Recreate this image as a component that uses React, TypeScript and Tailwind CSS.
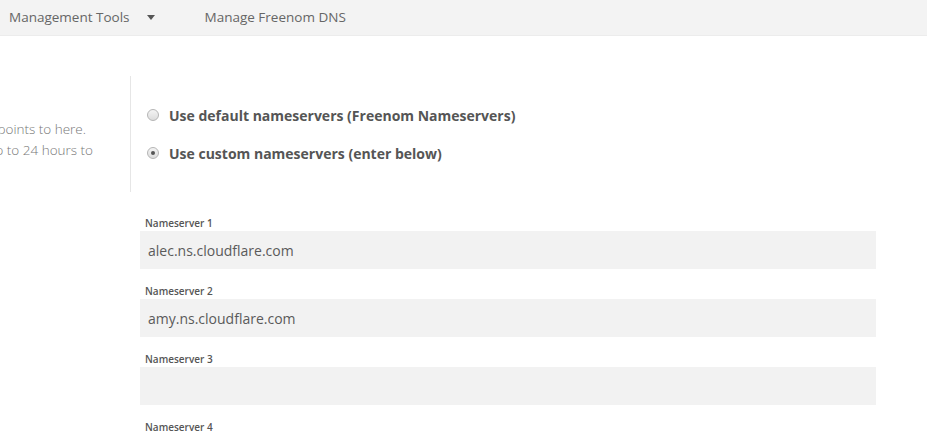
import React from 'react';

const font = { fontFamily: '"Open Sans", "Noto Sans", sans-serif' };

const servers = ['alec.ns.cloudflare.com', 'amy.ns.cloudflare.com', '', ''];

const Radio: React.FC<{ checked?: boolean; label: string }> = ({ checked, label }) => (
  <label className="flex items-center h-[20px]">
    <span className="w-[12px] h-[12px] rounded-full border border-[#b5b5b5] bg-gradient-to-b from-[#f4f4f4] to-[#dcdcdc] flex items-center justify-center mr-[10px]">
      {checked && <span className="w-[4px] h-[4px] rounded-full bg-[#555]" />}
    </span>
    <span className="text-[14px] font-bold text-[#555]">{label}</span>
  </label>
);

export default function App() {
  return (
    <div className="w-[927px] h-[431px] overflow-hidden bg-white" style={font}>
      <div className="h-[36px] bg-[#f3f3f3] border-b border-[#ececec] flex items-center text-[13.5px] text-[#666]">
        <span className="ml-[9px]">Management Tools</span>
        <svg className="ml-[17px]" width="8" height="5" viewBox="0 0 8 5"><path d="M0 0h8L4 5z" fill="#555" /></svg>
        <span className="ml-[50px]">Manage Freenom DNS</span>
      </div>

      <div className="flex mt-[40px]">
        <div className="w-[130px] h-[116px] overflow-hidden pt-[43px] text-[13.5px] font-light text-[#777] leading-[21px]">
          <div className="flex justify-end pr-[44px] whitespace-nowrap">your domain name points to here.</div>
          <div className="flex justify-end pr-[37px] whitespace-nowrap">Please allow up to 24 hours to</div>
        </div>
        <div className="border-l border-[#e6e6e6] h-[116px] pl-[16px] pt-[29px] flex flex-col gap-[18px]">
          <Radio label="Use default nameservers (Freenom Nameservers)" />
          <Radio checked label="Use custom nameservers (enter below)" />
        </div>
      </div>

      <div className="ml-[140px] w-[736px] mt-[24px] flex flex-col gap-[15px]">
        {servers.map((s, i) => (
          <div key={i}>
            <div className="text-[10px] font-semibold text-[#555] leading-[15px] ml-[5px]">Nameserver {i + 1}</div>
            <div className="h-[38px] bg-[#f2f2f2] flex items-center pl-[8px] text-[14px] text-[#5a5a5a]">{s}</div>
          </div>
        ))}
      </div>
    </div>
  );
}
